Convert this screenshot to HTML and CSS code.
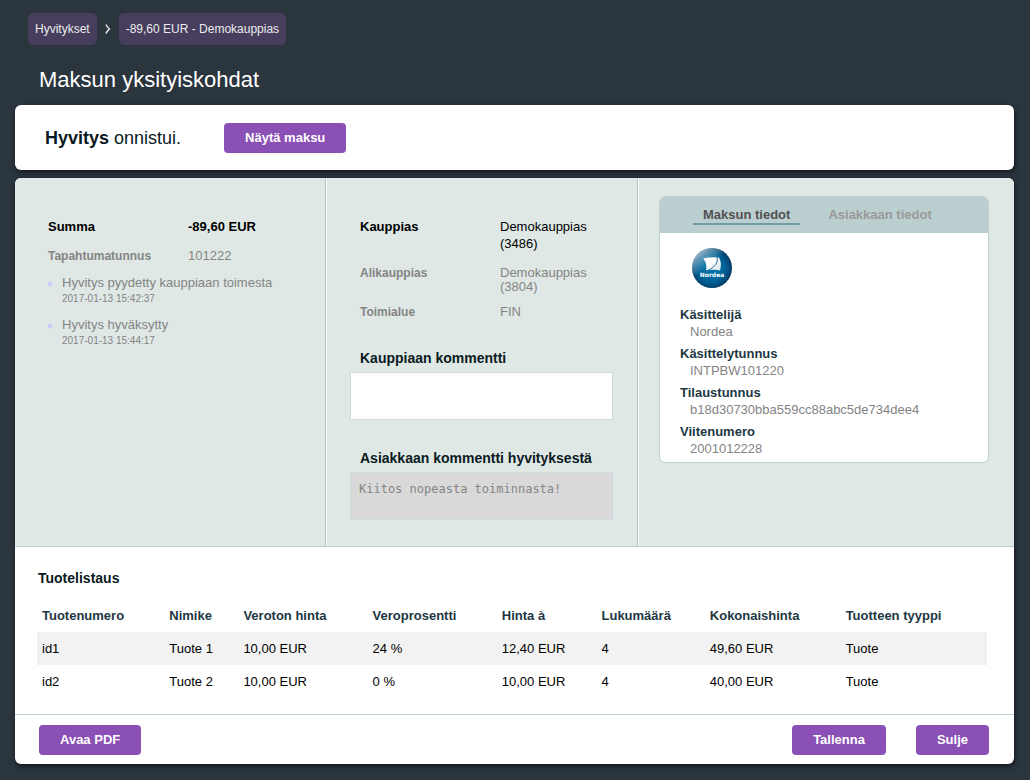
FILE: index.html
```html
<!DOCTYPE html>
<html lang="fi">
<head>
<meta charset="utf-8">
<meta name="viewport" content="width=device-width, initial-scale=1">
<title>Maksun yksityiskohdat</title>
<link rel="stylesheet" href="styles.css">
</head>
<body>
<nav class="crumbs" aria-label="Murupolku">
  <a class="crumb" href="#">Hyvitykset</a>
  <svg class="crumb-arrow" viewBox="0 0 6 10" aria-hidden="true"><path d="M1 0.5 Q2.2 3.2 4.4 5 Q2.2 6.8 1 9.5" fill="none" stroke="#e3e6e6" stroke-width="1.5"/></svg>
  <a class="crumb" href="#">-89,60 EUR - Demokauppias</a>
</nav>
<h1 class="page-title">Maksun yksityiskohdat</h1>
<main>
  <section class="panel status">
    <p class="status-text"><strong>Hyvitys</strong> onnistui.</p>
    <button class="btn" type="button">Näytä maksu</button>
  </section>
  <div class="panel">
    <div class="details">
      <section class="column summary">
        <dl class="facts">
          <div class="fact fact-main"><dt>Summa</dt><dd><strong>-89,60 EUR</strong></dd></div>
          <div class="fact"><dt>Tapahtumatunnus</dt><dd>101222</dd></div>
        </dl>
        <ul class="events">
          <li>Hyvitys pyydetty kauppiaan toimesta<time>2017-01-13 15:42:37</time></li>
          <li>Hyvitys hyväksytty<time>2017-01-13 15:44:17</time></li>
        </ul>
      </section>
      <section class="column merchant">
        <dl class="facts">
          <div class="fact fact-main"><dt>Kauppias</dt><dd>Demokauppias (3486)</dd></div>
          <div class="fact"><dt>Alikauppias</dt><dd>Demokauppias (3804)</dd></div>
          <div class="fact"><dt>Toimialue</dt><dd>FIN</dd></div>
        </dl>
        <div class="comments">
          <div class="field">
            <label for="merchant-comment">Kauppiaan kommentti</label>
            <textarea id="merchant-comment"></textarea>
          </div>
          <div class="field">
            <label for="customer-comment">Asiakkaan kommentti hyvityksestä</label>
            <textarea id="customer-comment" disabled>Kiitos nopeasta toiminnasta!</textarea>
          </div>
        </div>
      </section>
      <section class="column payment">
        <div class="card">
          <div class="tabs" role="tablist">
            <button class="tab tab-active" type="button" role="tab" aria-selected="true">Maksun tiedot</button>
            <button class="tab" type="button" role="tab" aria-selected="false">Asiakkaan tiedot</button>
          </div>
          <div class="card-body">
            <svg class="logo" viewBox="0 0 40 40" role="img" aria-label="Nordea">
              <defs>
                <radialGradient id="ball" cx="0.48" cy="0.5" r="0.54">
                  <stop offset="0" stop-color="#0078ad"/>
                  <stop offset="0.62" stop-color="#006297"/>
                  <stop offset="0.86" stop-color="#024a78"/>
                  <stop offset="1" stop-color="#02284e"/>
                </radialGradient>
                <linearGradient id="shine" x1="0.12" y1="0.08" x2="0.42" y2="0.46">
                  <stop offset="0" stop-color="#fff" stop-opacity="0.72"/>
                  <stop offset="0.35" stop-color="#fff" stop-opacity="0.4"/>
                  <stop offset="1" stop-color="#fff" stop-opacity="0"/>
                </linearGradient>
                <linearGradient id="sail" x1="0" y1="0" x2="1" y2="1">
                  <stop offset="0.4" stop-color="#fff"/>
                  <stop offset="1" stop-color="#d5e2ea"/>
                </linearGradient>
              </defs>
              <circle cx="20" cy="20" r="20" fill="url(#ball)"/>
              <circle cx="20" cy="20" r="20" fill="url(#shine)"/>
              <path d="M11.2 10.4 Q18 8.6 27 9.4 Q30.2 15.4 28 22.4 Q21.5 21 14 22.6 Q15.6 15.4 11.2 10.4Z" fill="url(#sail)"/>
              <path d="M25.2 9 Q27.2 17.4 15.2 22.8" fill="none" stroke="#12679a" stroke-width="0.9"/>
              <text class="logo-name" x="20" y="29" text-anchor="middle">Nordea</text>
            </svg>
            <dl class="payment-facts">
              <dt>Käsittelijä</dt><dd>Nordea</dd>
              <dt>Käsittelytunnus</dt><dd>INTPBW101220</dd>
              <dt>Tilaustunnus</dt><dd>b18d30730bba559cc88abc5de734dee4</dd>
              <dt>Viitenumero</dt><dd>2001012228</dd>
            </dl>
          </div>
        </div>
      </section>
    </div>
    <section class="products">
      <h2 class="products-title">Tuotelistaus</h2>
      <table class="products-table">
        <colgroup><col class="c-id"><col class="c-name"><col class="c-net"><col class="c-tax"><col class="c-price"><col class="c-count"><col class="c-total"><col class="c-type"></colgroup>
        <thead>
          <tr><th>Tuotenumero</th><th>Nimike</th><th>Veroton hinta</th><th>Veroprosentti</th><th>Hinta à</th><th>Lukumäärä</th><th>Kokonaishinta</th><th>Tuotteen tyyppi</th></tr>
        </thead>
        <tbody>
          <tr><td>id1</td><td>Tuote 1</td><td>10,00 EUR</td><td>24 %</td><td>12,40 EUR</td><td>4</td><td>49,60 EUR</td><td>Tuote</td></tr>
          <tr><td>id2</td><td>Tuote 2</td><td>10,00 EUR</td><td>0 %</td><td>10,00 EUR</td><td>4</td><td>40,00 EUR</td><td>Tuote</td></tr>
        </tbody>
      </table>
    </section>
    <footer class="actions">
      <button class="btn" type="button">Avaa PDF</button>
      <button class="btn btn-save" type="button">Tallenna</button>
      <button class="btn" type="button">Sulje</button>
    </footer>
  </div>
</main>
</body>
</html>
```
FILE: styles.css
```css
* { box-sizing: border-box; }
body {
  margin: 0;
  padding: 13px 16px 16px 15px;
  background: #2b353e;
  color: #000;
  font: 13px/17px "Liberation Sans", Arial, sans-serif;
}
h1, h2, p, dl, dd, ul { margin: 0; padding: 0; }
button, textarea { font: inherit; }

.crumbs { display: flex; align-items: center; gap: 8px; padding-left: 13px; }
.crumb {
  padding: 0 7px;
  border-radius: 5px;
  background: #463e5c;
  color: #ececf0;
  font-size: 12px;
  line-height: 32px;
  text-decoration: none;
}
.crumb-arrow { width: 6px; height: 10px; }
.page-title {
  padding: 21px 24px 11px;
  color: #fff;
  font-size: 22px;
  font-weight: normal;
  line-height: 28px;
}

.panel {
  border-radius: 6px;
  background: #fff;
  box-shadow: 1px 2px 5px rgba(0, 0, 0, 0.6);
}
.status { display: flex; align-items: center; gap: 43px; margin-bottom: 8px; padding: 18px 30px 17px; }
.status-text { color: #0a1a22; font-size: 18px; line-height: 30px; }
.btn {
  height: 30px;
  padding: 0 21px 1px;
  border: 0;
  border-radius: 4px;
  background: #8a50b5;
  color: #fff;
  font-weight: bold;
}

.details {
  display: grid;
  grid-template-columns: 310fr 312fr 377fr;
  border-bottom: 1px solid #bccfd0;
  border-radius: 6px 6px 0 0;
  background: #dfe8e5;
}
.column + .column { border-left: 1px solid #b5c5c1; box-shadow: inset 1px 0 #fff; }
.summary { padding: 40px 24px 26px 33px; }
.merchant { padding: 40px 24px 26px; }
.payment { padding: 18px 25px 26px 21px; }

.fact { display: grid; grid-template-columns: 140px 1fr; margin-bottom: 11px; color: #848484; line-height: 14px; }
.fact dt { font-size: 12px; font-weight: bold; }
.fact-main { margin-bottom: 14px; color: #000; line-height: 17px; }
.fact-main dt { font-size: 13px; }
.merchant .facts { padding-left: 10px; }
.events { list-style: none; padding-top: 1px; color: #848484; line-height: 16px; }
.events li {
  margin-bottom: 10px;
  padding-left: 14px;
  background: radial-gradient(circle at 2px 9px, #ccccfa 2px, transparent 3px) no-repeat;
}
.events time { display: block; font-size: 10px; }
.comments { display: grid; gap: 30px; padding-top: 20px; }
.field label { display: block; padding: 0 10px 5px; color: #0a1a22; font-size: 14px; font-weight: bold; }
.field textarea {
  display: block;
  width: 100%;
  height: 48px;
  padding: 8px;
  border: 1px solid #ccdce2;
  background: #fff;
  font: 12px/16px "DejaVu Sans Mono", monospace;
  resize: none;
}
.field textarea:disabled { background: #d9d9d9; color: #858585; }

.card { overflow: hidden; border: 1px solid #bccfd0; border-radius: 6px; background: #fff; }
.tabs { display: flex; gap: 18px; padding: 8px 33px; background: #bccfd0; }
.tab {
  height: 20px;
  padding: 0 10px;
  border: 0;
  border-bottom: 2px solid transparent;
  background: none;
  color: #999;
  font-weight: bold;
}
.tab-active { border-bottom-color: #6f9da7; color: #505050; }
.card-body { padding: 15px 20px 5px; }
.logo { display: block; width: 40px; height: 40px; margin: 0 12px 18px; }
.logo-name { fill: #fff; font: bold 6px "DejaVu Sans", sans-serif; }
.payment-facts dt { color: #1d3743; font-weight: bold; }
.payment-facts dd { padding-left: 10px; color: #848484; }
.payment-facts dd + dt { margin-top: 5px; }

.products { padding: 23px 27px 16px 22px; border-bottom: 1px solid #bccfd0; }
.products-title { padding: 0 1px 12px; color: #0a1a22; font-size: 14px; line-height: 17px; }
.products-table { width: 100%; border-collapse: collapse; table-layout: fixed; }
.products-table th, .products-table td { height: 33px; padding: 0 5px; text-align: left; }
.products-table th { color: #1d3743; }
.products-table tbody tr:nth-child(odd) { background: #f2f2f2; }
.c-id { width: 13.4%; }
.c-name { width: 7.8%; }
.c-net { width: 13.6%; }
.c-tax { width: 13.6%; }
.c-price { width: 10.5%; }
.c-count { width: 11.4%; }
.c-total { width: 14.3%; }
.c-type { width: 15.4%; }

.actions { display: flex; gap: 30px; padding: 10px 25px 9px 24px; }
.btn-save { margin-left: auto; }
```
